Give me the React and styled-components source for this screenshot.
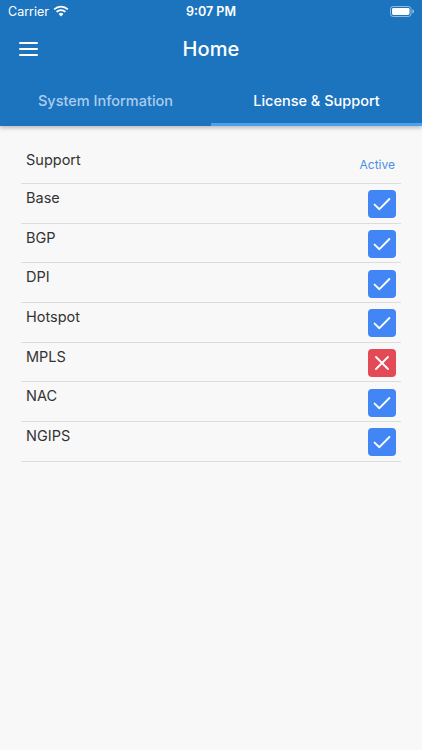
import React from 'react';
import styled, { createGlobalStyle } from 'styled-components';

const GlobalStyle = createGlobalStyle`
  html, body {
    margin: 0;
    padding: 0;
    background: #f8f8f8;
    font-family: Inter, "Liberation Sans", sans-serif;
  }
`;

const LICENSES = [
  { name: 'Base', active: true },
  { name: 'BGP', active: true },
  { name: 'DPI', active: true },
  { name: 'Hotspot', active: true },
  { name: 'MPLS', active: false },
  { name: 'NAC', active: true },
  { name: 'NGIPS', active: true },
];

const App = () => {
  return (
    <Screen>
      <GlobalStyle />
      <Header>
        <StatusBar>
          <StatusLeft>
            Carrier
            <WifiIcon />
          </StatusLeft>
          <Clock>9:07 PM</Clock>
          <StatusRight>
            <Battery />
          </StatusRight>
        </StatusBar>
        <TopBar>
          <MenuButton aria-label="menu">
            <span />
            <span />
            <span />
          </MenuButton>
          <Title>Home</Title>
        </TopBar>
        <Tabs>
          <Tab>System Information</Tab>
          <Tab active>License &amp; Support</Tab>
        </Tabs>
      </Header>

      <Content>
        <HeadRow>
          <RowLabel>Support</RowLabel>
          <ActiveCaption>Active</ActiveCaption>
        </HeadRow>
        {LICENSES.map(item => (
          <Row key={item.name}>
            <RowLabel>{item.name}</RowLabel>
            <StatusBox active={item.active}>
              {item.active ? <CheckIcon /> : <CrossIcon />}
            </StatusBox>
          </Row>
        ))}
      </Content>
    </Screen>
  );
};

const WifiIcon = () => (
  <svg width="16" height="12" viewBox="0 0 16 12">
    <path d="M8 11.5 L5.6 8.9 A3.4 3.4 0 0 1 10.4 8.9 Z" fill="#fff" />
    <path d="M3.6 6.9 A6.2 6.2 0 0 1 12.4 6.9" stroke="#fff" strokeWidth="1.8" fill="none" />
    <path d="M1.2 4.4 A9.6 9.6 0 0 1 14.8 4.4" stroke="#fff" strokeWidth="1.8" fill="none" />
  </svg>
);

const Battery = () => (
  <svg width="24" height="11" viewBox="0 0 24 11">
    <rect x="0.5" y="0.5" width="20.5" height="10" rx="2.6" stroke="#fff" strokeOpacity="0.5" fill="none" />
    <rect x="2" y="2" width="17.5" height="7" rx="1.4" fill="#fff" />
    <path d="M22.2 3.6 v3.8 a1.9 1.9 0 0 0 0 -3.8z" fill="#fff" fillOpacity="0.5" />
  </svg>
);

const CheckIcon = () => (
  <svg width="22" height="22" viewBox="0 0 22 22">
    <path d="M3.6 11.6 L8.4 16.2 L18.4 6" stroke="#fff" strokeWidth="1.9" fill="none" strokeLinecap="round" strokeLinejoin="round" />
  </svg>
);

const CrossIcon = () => (
  <svg width="22" height="22" viewBox="0 0 22 22">
    <path d="M5 5 L17 17 M17 5 L5 17" stroke="#fff" strokeWidth="1.9" fill="none" strokeLinecap="round" />
  </svg>
);

const Screen = styled.div`
  min-height: 750px;
  background: #f8f8f8;
`;

const Header = styled.header`
  background: #1c74bf;
  box-shadow: 0 2px 4px rgba(0, 0, 0, 0.25);
  color: #fff;
  position: relative;
  z-index: 1;
`;

const StatusBar = styled.div`
  height: 22px;
  display: grid;
  grid-template-columns: 1fr auto 1fr;
  align-items: center;
  padding: 0 8px 0 8px;
  font-size: 12.5px;
  font-weight: 600;
`;

const StatusLeft = styled.div`
  display: flex;
  align-items: center;
  gap: 4px;
  font-weight: 400;
  font-size: 12.5px;
`;

const Clock = styled.div`
  text-align: center;
`;

const StatusRight = styled.div`
  display: flex;
  justify-content: flex-end;
`;

const TopBar = styled.div`
  height: 54px;
  display: flex;
  align-items: center;
  justify-content: center;
  position: relative;
`;

const MenuButton = styled.div`
  position: absolute;
  left: 19px;
  top: 20px;
  width: 19px;
  display: flex;
  flex-direction: column;
  gap: 4px;

  span {
    display: block;
    height: 2px;
    background: #fff;
    border-radius: 1px;
  }
`;

const Title = styled.h1`
  margin: 0;
  font-size: 20px;
  font-weight: 500;
  letter-spacing: 0.1px;
`;

const Tabs = styled.nav`
  display: flex;
  height: 50px;
`;

const Tab = styled.div`
  flex: 1;
  display: flex;
  align-items: center;
  justify-content: center;
  padding-top: 1px;
  font-size: 14.5px;
  font-weight: 500;
  color: ${p => (p.active ? '#ffffff' : '#a9cdee')};
  border-bottom: 3px solid ${p => (p.active ? '#4aa2ef' : 'transparent')};
`;

const Content = styled.main`
  padding: 20px 21px 0;
`;

const HeadRow = styled.div`
  display: flex;
  justify-content: space-between;
  align-items: flex-end;
  height: 37px;
  padding: 0 6px 0 5px;
  border-bottom: 1px solid #dcdcdc;
`;

const Row = styled.div`
  display: flex;
  justify-content: space-between;
  align-items: center;
  height: 38.7px;
  padding: 0 5px;
  border-bottom: 1px solid #dcdcdc;
`;

const RowLabel = styled.span`
  align-self: flex-start;
  padding-top: 5px;
  font-size: 14.5px;
  color: #333;
`;

const ActiveCaption = styled.span`
  padding-bottom: 11px;
  font-size: 12px;
  color: #4a90e2;
`;

const StatusBox = styled.div`
  width: 28px;
  height: 28px;
  border-radius: 4px;
  display: flex;
  align-items: center;
  justify-content: center;
  margin-top: 2px;
  background: ${p => (p.active ? '#4285f4' : '#e34a55')};
`;

export default App;
